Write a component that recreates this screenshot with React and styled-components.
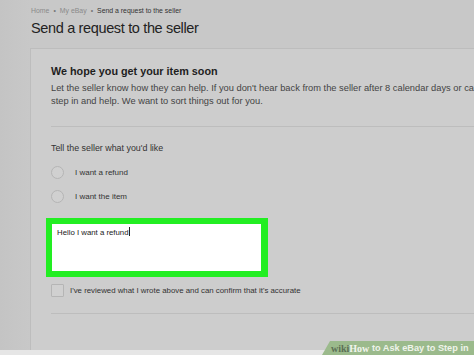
import React from 'react'
import styled, { createGlobalStyle } from 'styled-components'

const GlobalStyle = createGlobalStyle`
    body {
        margin: 0;
        background: #c8c8c8;
        font-family: "Liberation Sans", Arial, sans-serif;
    }
`;

function App() {
    return (
        <PageStyled>
            <GlobalStyle />
            <div className="head">
                <Breadcrumb>
                    <span>Home</span>
                    <span className="sep">•</span>
                    <span>My eBay</span>
                    <span className="sep">•</span>
                    <span className="current">Send a request to the seller</span>
                </Breadcrumb>
                <Title>Send a request to the seller</Title>
            </div>
            <Card>
                <Heading>We hope you get your item soon</Heading>
                <Para>
                    <div>Let the seller know how they can help. If you don't hear back from the seller after 8 calendar days or can't reach an agreement, we can</div>
                    <div>step in and help. We want to sort things out for you.</div>
                </Para>
                <Divider $top={18} />
                <Label>Tell the seller what you'd like</Label>
                <Options>
                    <Option>
                        <Radio />
                        <span>I want a refund</span>
                    </Option>
                    <Option>
                        <Radio />
                        <span>I want the item</span>
                    </Option>
                </Options>
                <Highlight>
                    <TextArea>Hello I want a refund<Caret /></TextArea>
                </Highlight>
                <Confirm>
                    <Check />
                    <span>I've reviewed what I wrote above and can confirm that it's accurate</span>
                </Confirm>
                <Divider $top={17} />
            </Card>
            <BottomStrip />
            <Badge>
                <span className="wiki">wiki</span>
                <span className="how">How</span>
                <span className="rest"> to Ask eBay to Step in</span>
            </Badge>
        </PageStyled>
    )
}

const PageStyled = styled.div`
    position: relative;
    width: 474px;
    height: 355px;
    overflow: hidden;
    display: flex;
    flex-direction: column;
    background: linear-gradient(to right, #c4c4c4 0, #c8c8c8 30px);
    .head{
        padding: 6px 0 0 31px;
        height: 48px;
        box-sizing: border-box;
    }
`;

const Breadcrumb = styled.div`
    display: flex;
    gap: 4px;
    font-size: 6.9px;
    color: #8a8a8a;
    line-height: 9px;
    .sep{
        color: #777;
    }
    .current{
        color: #333;
    }
`;

const Title = styled.h1`
    margin: 3px 0 0;
    font-size: 14.5px;
    letter-spacing: -0.35px;
    font-weight: normal;
    color: #222;
    line-height: 20px;
`;

const Card = styled.div`
    flex: 1;
    margin-left: 30px;
    border: 1px solid #bdbdbd;
    border-right: none;
    border-bottom: none;
    background: #cdcdcd;
    padding: 15px 0 0 20px;
    overflow: hidden;
`;

const Heading = styled.h2`
    margin: 0;
    font-size: 10.8px;
    font-weight: bold;
    color: #1e1e1e;
    line-height: 14px;
`;

const Para = styled.div`
    margin-top: 4px;
    font-size: 9.3px;
    line-height: 13px;
    color: #444;
    white-space: nowrap;
`;

const Divider = styled.div`
    margin-top: ${props => props.$top}px;
    height: 1px;
    background: #bdbdbd;
`;

const Label = styled.div`
    margin-top: 15px;
    font-size: 8.9px;
    color: #333;
    line-height: 12px;
`;

const Options = styled.div`
    margin-top: 6px;
    display: flex;
    flex-direction: column;
`;

const Option = styled.div`
    display: flex;
    align-items: center;
    gap: 11px;
    height: 24px;
    font-size: 8px;
    color: #333;
`;

const Radio = styled.span`
    width: 11px;
    height: 11px;
    border: 1px solid #b5b5b5;
    border-radius: 50%;
    background: #d0d0d0;
`;

const Highlight = styled.div`
    margin: 10px 0 0 -5px;
    width: 222px;
    height: 59px;
    box-sizing: border-box;
    background: #22ee22;
    padding: 6px 7px 6px 6px;
`;

const TextArea = styled.div`
    height: 100%;
    background: #fff;
    padding: 3px 5px;
    box-sizing: border-box;
    font-size: 7.8px;
    color: #222;
    line-height: 11px;
`;

const Caret = styled.span`
    display: inline-block;
    width: 1px;
    height: 9px;
    background: #222;
    vertical-align: -1px;
`;

const Confirm = styled.div`
    display: flex;
    align-items: center;
    gap: 6px;
    height: 12px;
    margin-top: 7px;
    font-size: 7.85px;
    color: #333;
`;

const Check = styled.span`
    width: 11px;
    height: 11px;
    border: 1px solid #b5b5b5;
    border-radius: 1px;
    background: #d0d0d0;
`;

const BottomStrip = styled.div`
    height: 5px;
    background: #e6e6e6;
`;

const Badge = styled.div`
    position: absolute;
    right: 0;
    bottom: 0;
    width: 152px;
    height: 14px;
    box-sizing: border-box;
    padding: 0 0 0 9px;
    background: #9bba8c;
    clip-path: polygon(8px 0, 100% 0, 100% 100%, 0 100%);
    display: flex;
    align-items: center;
    font-size: 9.2px;
    white-space: pre;
    .wiki{
        font-family: "Liberation Serif", serif;
        font-weight: bold;
        color: #5c6f55;
        font-size: 10px;
    }
    .how{
        font-family: "Liberation Serif", serif;
        font-weight: bold;
        color: #f2f5ee;
        font-size: 10px;
    }
    .rest{
        color: #eef3ea;
        font-weight: bold;
    }
`;

export default App
